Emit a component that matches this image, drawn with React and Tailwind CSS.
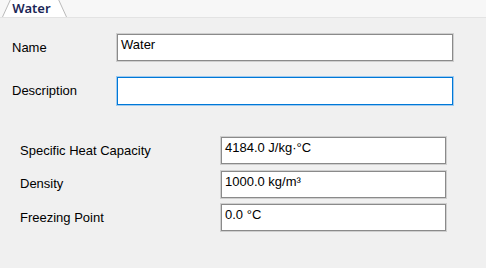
import React from "react";

const font = { fontFamily: '"Liberation Sans", Arial, sans-serif' };

const Field = ({ value, focused, className = "" }) => (
  <div
    className={`bg-white flex items-start pl-[3px] pt-[2px] text-[13px] leading-[15px] text-black ${
      focused
        ? "border border-[#0078d7] shadow-[0_0_0_1px_#9fcaef]"
        : "border border-[#8a8a8a] shadow-[0_0_0_1px_#cfcfcf]"
    } ${className}`}
  >
    {value}
  </div>
);

const Tab = ({ label }) => (
  <div className="relative ml-[2px] w-[65px] h-[18px] flex items-center justify-center">
    <svg
      className="absolute inset-0"
      width="65"
      height="18"
      viewBox="0 0 65 18"
    >
      <path d="M0.5 18 L8.5 0.5 L56.5 0.5 L64.5 18 Z" fill="#ffffff" />
      <path
        d="M0.5 18 L8.5 0.5 L56.5 0.5 L64.5 18"
        fill="none"
        stroke="#b9b9b9"
        strokeWidth="1"
      />
    </svg>
    <span
      className="relative text-[13px] font-semibold text-[#1b2656] leading-[16px] pr-[6px]"
      style={{ fontFamily: '"Noto Sans", sans-serif' }}
    >
      {label}
    </span>
  </div>
);

const properties = [
  { label: "Specific Heat Capacity", value: "4184.0 J/kg·°C" },
  { label: "Density", value: "1000.0 kg/m³" },
  { label: "Freezing Point", value: "0.0 °C" },
];

export default function App() {
  return (
    <div className="w-[486px] h-[268px] bg-[#f0f0f0] overflow-hidden" style={font}>
      <div className="h-[18px] bg-[#f7f7f7] flex items-end border-b border-[#e3e3e3]">
        <Tab label="Water" />
      </div>

      <div className="flex items-center mt-[16px] h-[27px]">
        <span className="w-[117px] pl-[12px] text-[13px] text-black">Name</span>
        <Field value="Water" className="w-[336px] h-[27px]" />
      </div>

      <div className="flex items-center mt-[16px] h-[28px]">
        <span className="w-[117px] pl-[12px] text-[13px] text-black">Description</span>
        <Field value="" focused className="w-[336px] h-[28px]" />
      </div>

      <div className="flex flex-col gap-[6.5px] mt-[32px]">
        {properties.map(({ label, value }, index) => (
          <div key={index} className="flex items-center h-[27px]">
            <span className="w-[221px] pl-[20px] text-[13px] text-black">{label}</span>
            <Field value={value} className="w-[225px] h-[27px]" />
          </div>
        ))}
      </div>
    </div>
  );
}
